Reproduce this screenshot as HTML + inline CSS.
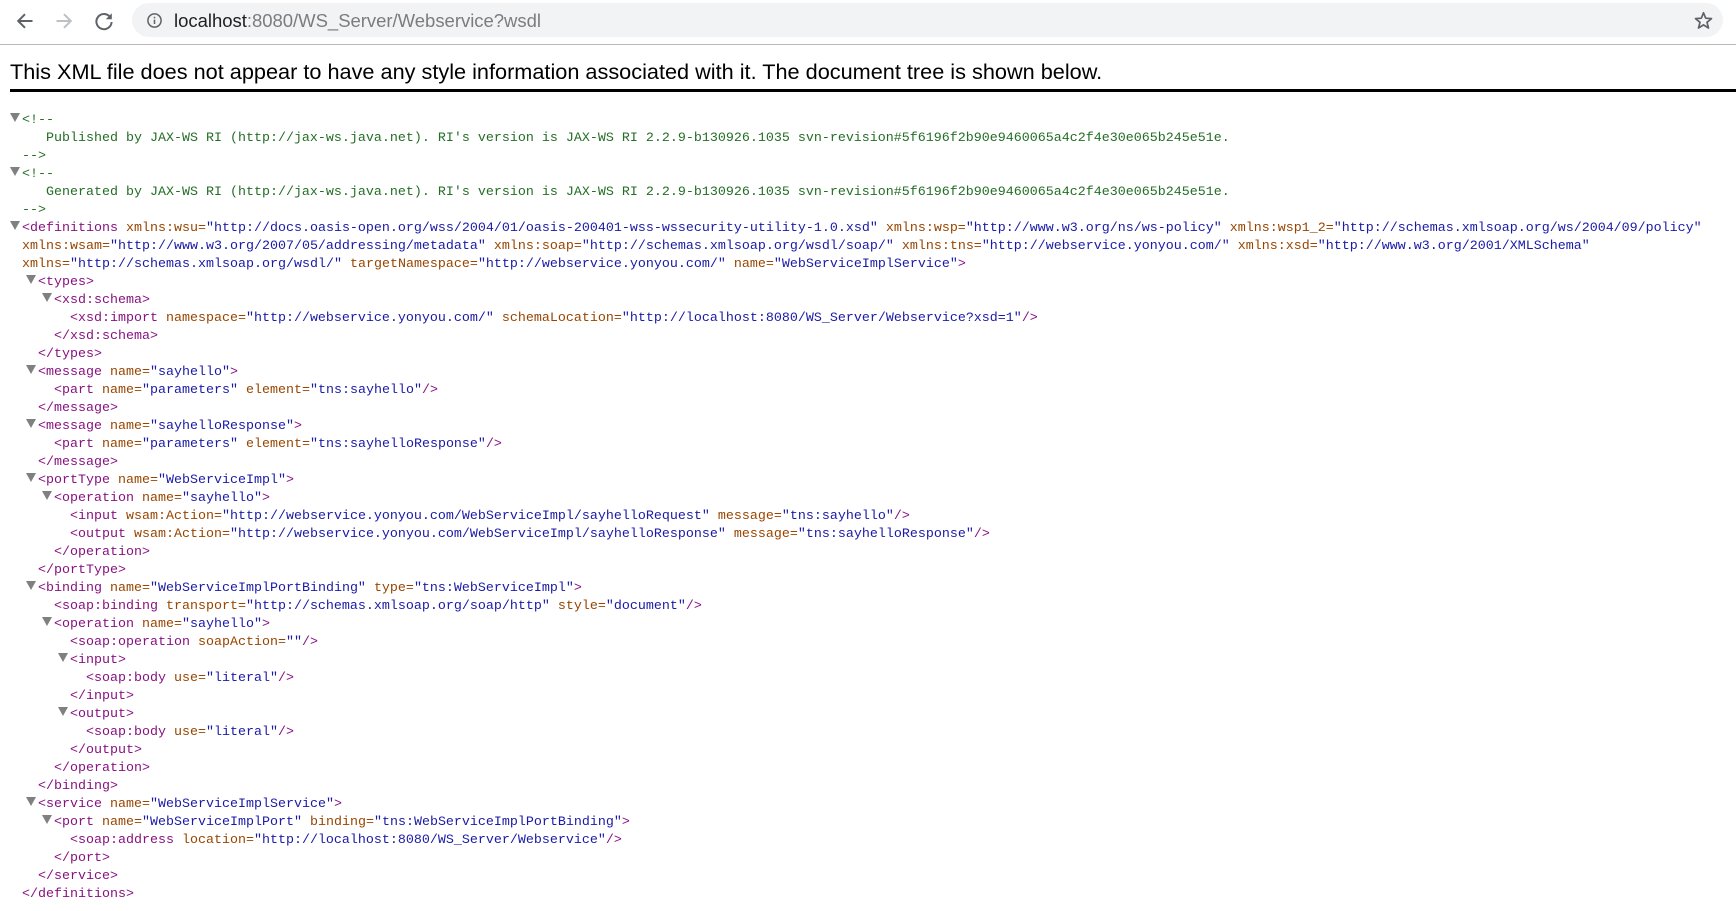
<!DOCTYPE html>
<html><head><meta charset="utf-8"><title>localhost:8080/WS_Server/Webservice?wsdl</title>
<style>
html,body{margin:0;padding:0;background:#fff;width:1736px;height:911px;overflow:hidden}
#bar{position:absolute;left:0;top:0;width:1736px;height:44px;border-bottom:1px solid #b9b9b9;box-sizing:content-box}
#omni{position:absolute;left:132px;top:3px;width:1591px;height:34px;border-radius:17px;background:#f1f3f4}
#url{position:absolute;left:174px;top:9px;font:18.5px/23px "Liberation Sans",sans-serif;color:#7a7d80;white-space:nowrap;letter-spacing:-.02px}
#url b{font-weight:normal;color:#202124}
svg.ic{position:absolute}
#msg{position:absolute;left:10px;top:58px;font:21.7px/28px "Liberation Sans",sans-serif;color:#000;white-space:nowrap}
#rule{position:absolute;left:10px;top:89px;width:1726px;height:3px;background:#000}
#code{position:absolute;left:22px;top:112px;margin:0;font:13.33px/18px "Liberation Mono",monospace;color:#881280}
#code div{position:relative;height:18px;white-space:pre}
i{position:absolute;top:1px;width:0;height:0;border-left:5px solid transparent;border-right:5px solid transparent;border-top:9px solid #808080}
.c{color:#236e25}.a{color:#994500}.v{color:#1a1aa6}
</style></head><body>
<div id="bar"></div>
<svg class="ic" style="left:15px;top:11px" width="20" height="20" viewBox="0 0 20 20"><path d="M17.5 10H3.5M10 3.2L3.2 10l6.8 6.8" fill="none" stroke="#5f6368" stroke-width="2"/></svg>
<svg class="ic" style="left:54px;top:11px" width="20" height="20" viewBox="0 0 20 20"><path d="M2.5 10H16.5M10 3.2l6.8 6.8-6.8 6.8" fill="none" stroke="#bdc1c6" stroke-width="2"/></svg>
<svg class="ic" style="left:94px;top:11px" width="20" height="20" viewBox="0 0 20 20"><path d="M16.2 6.2A7.6 7.6 0 1 0 17.6 11" fill="none" stroke="#5f6368" stroke-width="2"/><path d="M17.8 2.2V8.2H11.8z" fill="#5f6368"/></svg>
<div id="omni"></div>
<svg class="ic" style="left:146px;top:12px" width="17" height="17" viewBox="0 0 17 17"><circle cx="8.5" cy="8.5" r="6.6" fill="none" stroke="#5f6368" stroke-width="1.5"/><path d="M8.5 7.6v4.4M8.5 4.8v1.6" stroke="#5f6368" stroke-width="1.5"/></svg>
<div id="url"><b>localhost</b>:8080/WS_Server/Webservice?wsdl</div>
<svg class="ic" style="left:1693px;top:10px" width="21" height="21" viewBox="0 0 21 21"><path d="M10.5 2.8l2.2 5.4 5.8.4-4.5 3.7 1.5 5.7-5-3.1-5 3.1 1.5-5.7-4.5-3.7 5.8-.4z" fill="none" stroke="#5f6368" stroke-width="1.7" stroke-linejoin="round"/></svg>
<div id="msg">This XML file does not appear to have any style information associated with it. The document tree is shown below.</div>
<div id="rule"></div>
<div id="code"><div><i style="left:-12px"></i><span class="c">&lt;!--</span></div><div class="c">   Published by JAX-WS RI (http://jax-ws.java.net). RI's version is JAX-WS RI 2.2.9-b130926.1035 svn-revision#5f6196f2b90e9460065a4c2f4e30e065b245e51e.</div><div class="c">--&gt;</div><div><i style="left:-12px"></i><span class="c">&lt;!--</span></div><div class="c">   Generated by JAX-WS RI (http://jax-ws.java.net). RI's version is JAX-WS RI 2.2.9-b130926.1035 svn-revision#5f6196f2b90e9460065a4c2f4e30e065b245e51e.</div><div class="c">--&gt;</div><div><i style="left:-12px"></i>&lt;definitions <span class="a">xmlns:wsu=</span><span class="v">"http://docs.oasis-open.org/wss/2004/01/oasis-200401-wss-wssecurity-utility-1.0.xsd"</span> <span class="a">xmlns:wsp=</span><span class="v">"http://www.w3.org/ns/ws-policy"</span> <span class="a">xmlns:wsp1_2=</span><span class="v">"http://schemas.xmlsoap.org/ws/2004/09/policy"</span></div><div><span class="a">xmlns:wsam=</span><span class="v">"http://www.w3.org/2007/05/addressing/metadata"</span> <span class="a">xmlns:soap=</span><span class="v">"http://schemas.xmlsoap.org/wsdl/soap/"</span> <span class="a">xmlns:tns=</span><span class="v">"http://webservice.yonyou.com/"</span> <span class="a">xmlns:xsd=</span><span class="v">"http://www.w3.org/2001/XMLSchema"</span></div><div><span class="a">xmlns=</span><span class="v">"http://schemas.xmlsoap.org/wsdl/"</span> <span class="a">targetNamespace=</span><span class="v">"http://webservice.yonyou.com/"</span> <span class="a">name=</span><span class="v">"WebServiceImplService"</span>&gt;</div><div><i style="left:4px"></i>  &lt;types&gt;</div><div><i style="left:20px"></i>    &lt;xsd:schema&gt;</div><div>      &lt;xsd:import <span class="a">namespace=</span><span class="v">"http://webservice.yonyou.com/"</span> <span class="a">schemaLocation=</span><span class="v">"http://localhost:8080/WS_Server/Webservice?xsd=1"</span>/&gt;</div><div>    &lt;/xsd:schema&gt;</div><div>  &lt;/types&gt;</div><div><i style="left:4px"></i>  &lt;message <span class="a">name=</span><span class="v">"sayhello"</span>&gt;</div><div>    &lt;part <span class="a">name=</span><span class="v">"parameters"</span> <span class="a">element=</span><span class="v">"tns:sayhello"</span>/&gt;</div><div>  &lt;/message&gt;</div><div><i style="left:4px"></i>  &lt;message <span class="a">name=</span><span class="v">"sayhelloResponse"</span>&gt;</div><div>    &lt;part <span class="a">name=</span><span class="v">"parameters"</span> <span class="a">element=</span><span class="v">"tns:sayhelloResponse"</span>/&gt;</div><div>  &lt;/message&gt;</div><div><i style="left:4px"></i>  &lt;portType <span class="a">name=</span><span class="v">"WebServiceImpl"</span>&gt;</div><div><i style="left:20px"></i>    &lt;operation <span class="a">name=</span><span class="v">"sayhello"</span>&gt;</div><div>      &lt;input <span class="a">wsam:Action=</span><span class="v">"http://webservice.yonyou.com/WebServiceImpl/sayhelloRequest"</span> <span class="a">message=</span><span class="v">"tns:sayhello"</span>/&gt;</div><div>      &lt;output <span class="a">wsam:Action=</span><span class="v">"http://webservice.yonyou.com/WebServiceImpl/sayhelloResponse"</span> <span class="a">message=</span><span class="v">"tns:sayhelloResponse"</span>/&gt;</div><div>    &lt;/operation&gt;</div><div>  &lt;/portType&gt;</div><div><i style="left:4px"></i>  &lt;binding <span class="a">name=</span><span class="v">"WebServiceImplPortBinding"</span> <span class="a">type=</span><span class="v">"tns:WebServiceImpl"</span>&gt;</div><div>    &lt;soap:binding <span class="a">transport=</span><span class="v">"http://schemas.xmlsoap.org/soap/http"</span> <span class="a">style=</span><span class="v">"document"</span>/&gt;</div><div><i style="left:20px"></i>    &lt;operation <span class="a">name=</span><span class="v">"sayhello"</span>&gt;</div><div>      &lt;soap:operation <span class="a">soapAction=</span><span class="v">""</span>/&gt;</div><div><i style="left:36px"></i>      &lt;input&gt;</div><div>        &lt;soap:body <span class="a">use=</span><span class="v">"literal"</span>/&gt;</div><div>      &lt;/input&gt;</div><div><i style="left:36px"></i>      &lt;output&gt;</div><div>        &lt;soap:body <span class="a">use=</span><span class="v">"literal"</span>/&gt;</div><div>      &lt;/output&gt;</div><div>    &lt;/operation&gt;</div><div>  &lt;/binding&gt;</div><div><i style="left:4px"></i>  &lt;service <span class="a">name=</span><span class="v">"WebServiceImplService"</span>&gt;</div><div><i style="left:20px"></i>    &lt;port <span class="a">name=</span><span class="v">"WebServiceImplPort"</span> <span class="a">binding=</span><span class="v">"tns:WebServiceImplPortBinding"</span>&gt;</div><div>      &lt;soap:address <span class="a">location=</span><span class="v">"http://localhost:8080/WS_Server/Webservice"</span>/&gt;</div><div>    &lt;/port&gt;</div><div>  &lt;/service&gt;</div><div>&lt;/definitions&gt;</div></div>
</body></html>
